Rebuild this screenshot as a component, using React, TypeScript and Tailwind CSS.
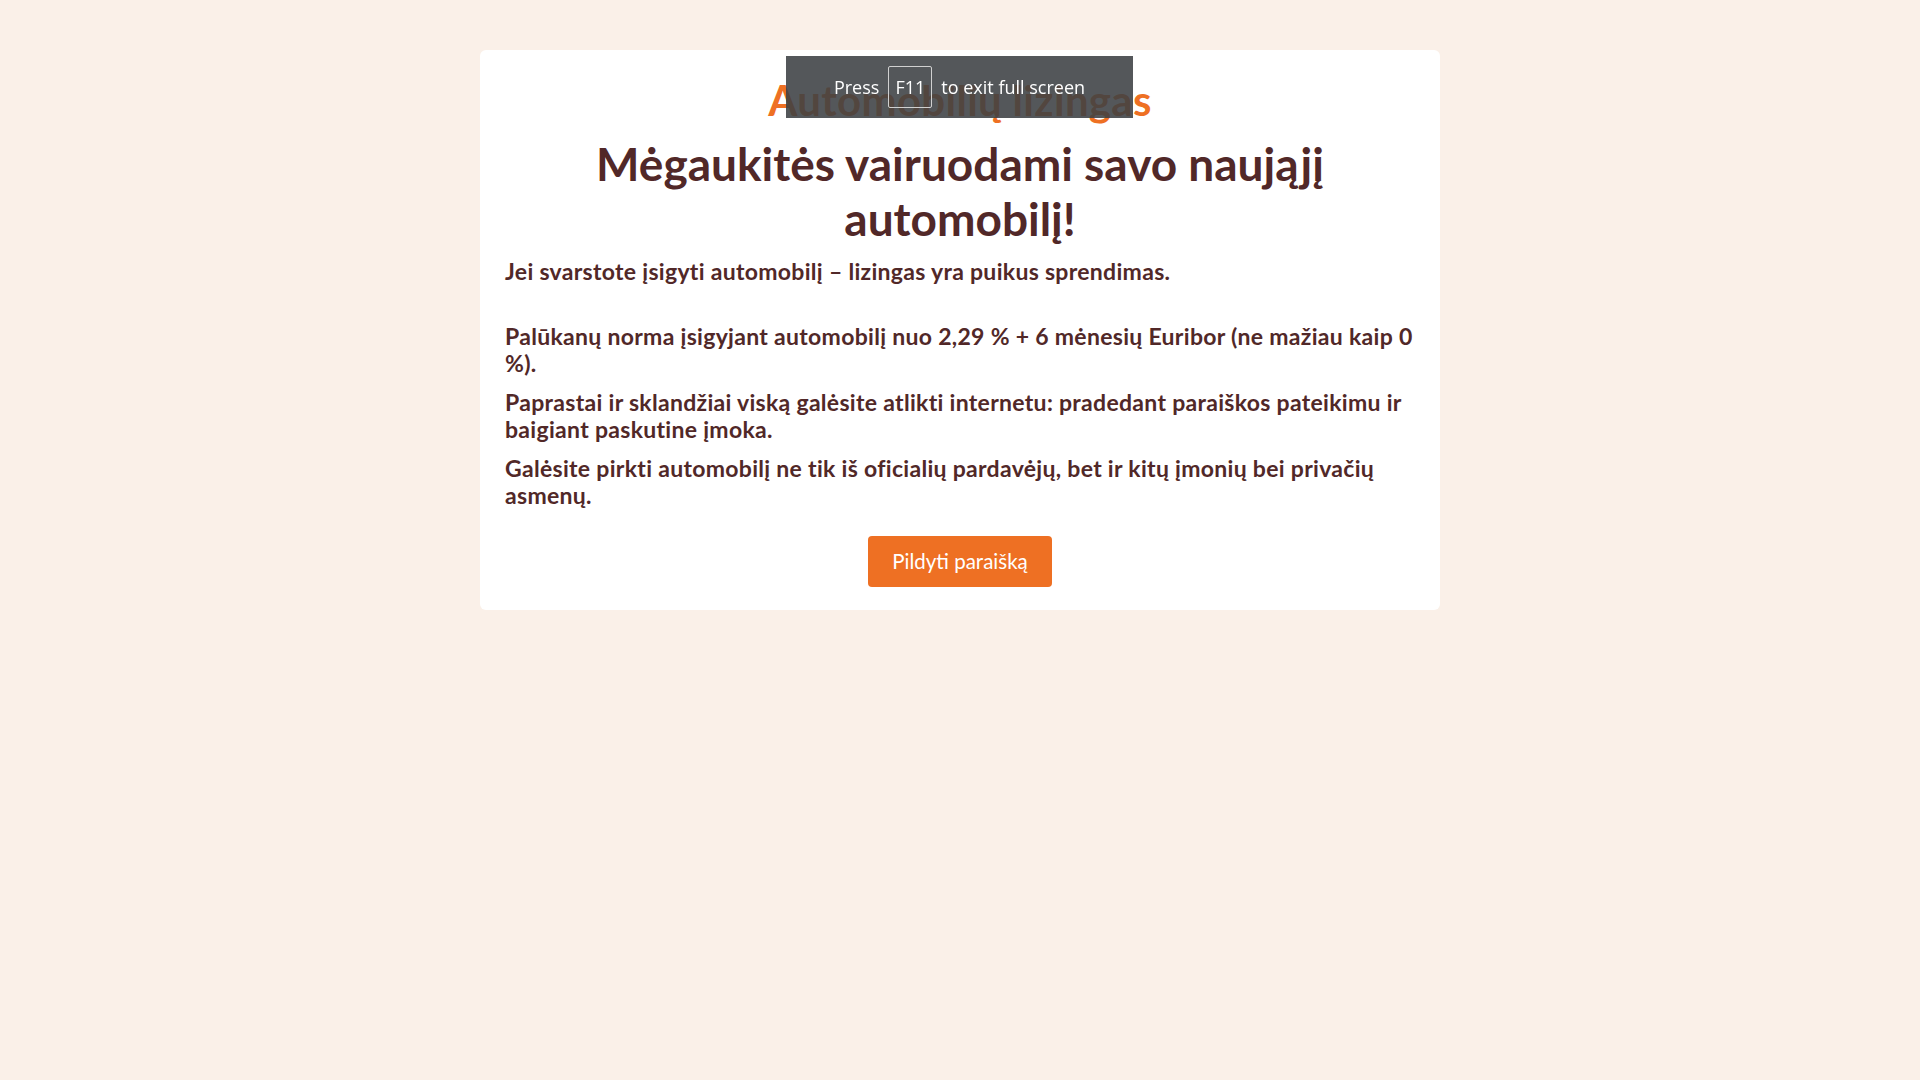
export default function App() {
  const body = "font-['Lato','Open_Sans',sans-serif]";
  return (
    <div className={`min-h-screen bg-[#faf0e8] pt-[50px] ${body}`}>
      <section className="mx-auto w-[960px] rounded-md bg-white px-[25px] pb-[23px] pt-[22px] text-[#512828]">
        <h2 className="text-center text-[42px] font-bold leading-[56px] tracking-[0.3px] text-[#ee7023]">Automobilių lizingas</h2>
        <h1 className="mt-[8px] text-center text-[46px] font-bold leading-[55px]">
          Mėgaukitės vairuodami savo naująjį
          <br />
          automobilį!
        </h1>
        <div className="mt-[12px] text-[23px] font-bold leading-[27px] tracking-[0.3px]">
          <p>Jei svarstote įsigyti automobilį – lizingas yra puikus sprendimas.</p>
          <p className="mt-[38px]">Palūkanų norma įsigyjant automobilį nuo 2,29 % + 6 mėnesių Euribor (ne mažiau kaip 0 %).</p>
          <p className="mt-[12px]">Paprastai ir sklandžiai viską galėsite atlikti internetu: pradedant paraiškos pateikimu ir baigiant paskutine įmoka.</p>
          <p className="mt-[12px]">Galėsite pirkti automobilį ne tik iš oficialių pardavėjų, bet ir kitų įmonių bei privačių asmenų.</p>
        </div>
        <div className="mt-[27px] flex justify-center">
          <button className="h-[51px] w-[184px] rounded-[4px] bg-[#ee7023] text-[20.5px] text-white">Pildyti paraišką</button>
        </div>
      </section>

      <div className="fixed left-[786px] top-[56px] flex h-[62px] w-[347px] items-center justify-center gap-[9px] bg-[rgba(60,64,67,0.88)] font-['Open_Sans',sans-serif] text-[18px] text-white">
        <span>Press</span>
        <span className="flex h-[42px] w-[44px] items-center justify-center rounded-[2px] border border-[#d0d0d0]">F11</span>
        <span>to exit full screen</span>
      </div>
    </div>
  );
}
